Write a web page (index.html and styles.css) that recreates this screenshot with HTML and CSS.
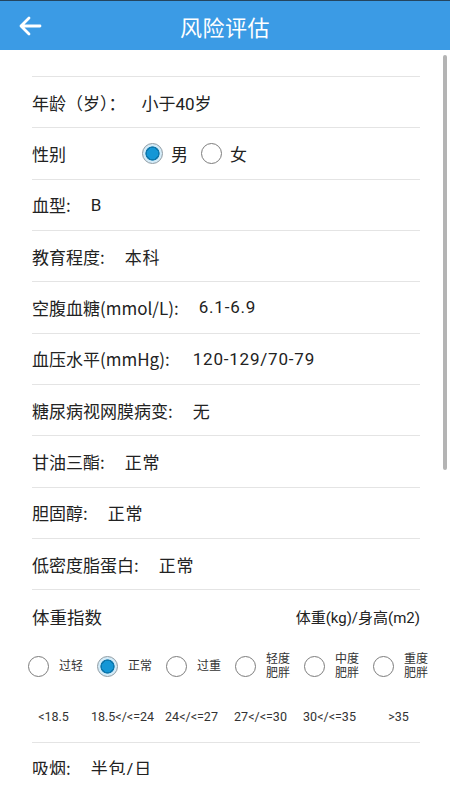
FILE: index.html
```html
<!DOCTYPE html>
<html lang="zh-CN">
<head>
<meta charset="utf-8">
<title>风险评估</title>
<link rel="stylesheet" href="styles.css">
</head>
<body>
<header class="appbar">
  <div class="appbar__left">
    <svg class="back" width="26" height="22" viewBox="0 0 26 22" aria-hidden="true">
      <path d="M3 11 H22 M11 3 L3 11 L11 19" fill="none" stroke="#fff" stroke-width="2.8" stroke-linecap="round" stroke-linejoin="round"/>
    </svg>
  </div>
  <h1 class="appbar__title">风险评估</h1>
  <div class="appbar__right"></div>
</header>
<main class="scroll">
  <div class="list">
    <div class="spacer"></div>
    <div class="row"><span class="label">年龄（岁）：</span><span class="value value--tight">小于40岁</span></div>
    <div class="row">
      <span class="label label--fixed">性别</span>
      <span class="radio radio--on"></span><span class="choice">男</span>
      <span class="radio"></span><span class="choice">女</span>
    </div>
    <div class="row"><span class="label">血型:</span><span class="value">B</span></div>
    <div class="row"><span class="label">教育程度:</span><span class="value">本科</span></div>
    <div class="row"><span class="label">空腹血糖(mmol/L):</span><span class="value">6.1-6.9</span></div>
    <div class="row"><span class="label">血压水平(mmHg):</span><span class="value value--wider">120-129/70-79</span></div>
    <div class="row"><span class="label">糖尿病视网膜病变:</span><span class="value">无</span></div>
    <div class="row"><span class="label">甘油三酯:</span><span class="value">正常</span></div>
    <div class="row"><span class="label">胆固醇:</span><span class="value">正常</span></div>
    <div class="row"><span class="label">低密度脂蛋白:</span><span class="value">正常</span></div>
    <div class="bmi">
      <div class="bmi__head">
        <span class="bmi__title">体重指数</span>
        <span class="bmi__unit">体重(kg)/身高(m2)</span>
      </div>
      <div class="bmi__options">
        <div class="opt"><span class="radio"></span><span class="opt__text">过轻</span></div>
        <div class="opt"><span class="radio radio--on"></span><span class="opt__text">正常</span></div>
        <div class="opt"><span class="radio"></span><span class="opt__text">过重</span></div>
        <div class="opt"><span class="radio"></span><span class="opt__text">轻度<br>肥胖</span></div>
        <div class="opt"><span class="radio"></span><span class="opt__text">中度<br>肥胖</span></div>
        <div class="opt"><span class="radio"></span><span class="opt__text">重度<br>肥胖</span></div>
      </div>
      <div class="bmi__ranges">
        <span>&lt;18.5</span>
        <span>18.5&lt;/&lt;=24</span>
        <span>24&lt;/&lt;=27</span>
        <span>27&lt;/&lt;=30</span>
        <span>30&lt;/&lt;=35</span>
        <span>&gt;35</span>
      </div>
    </div>
    <div class="row"><span class="label">吸烟:</span><span class="value">半包/日</span></div>
  </div>
  <div class="scrollbar"></div>
</main>
<footer class="footer"></footer>
</body>
</html>
```
FILE: styles.css
```css
* { box-sizing: border-box; }

html, body {
  margin: 0;
  padding: 0;
  background: #fff;
}

body {
  width: 450px;
  height: 800px;
  overflow: hidden;
  font-family: Roboto, "Noto Sans CJK SC", sans-serif;
  color: #222;
}

.appbar {
  height: 50px;
  background: #3b9be5;
  border-top: 1px solid #24455f;
  display: grid;
  grid-template-columns: 1fr auto 1fr;
  align-items: center;
}

.appbar__left {
  display: flex;
  align-items: center;
  padding-left: 18px;
  padding-top: 1px;
}

.back { display: block; }

.appbar__title {
  margin: 0;
  font-family: "Noto Sans CJK SC", sans-serif;
  font-size: 22px;
  font-weight: normal;
  color: #fff;
  letter-spacing: 0.5px;
}

.scroll {
  position: relative;
  height: 725px;
  overflow: hidden;
}

.list {
  padding: 0 30px 0 32px;
}

.spacer {
  height: 27px;
  border-bottom: 1px solid #e4e4e4;
}

.row {
  height: 51.33px;
  border-bottom: 1px solid #e4e4e4;
  display: flex;
  align-items: center;
  font-size: 17px;
  white-space: nowrap;
}

.label {
  flex: none;
  font-family: "Noto Sans CJK SC", sans-serif;
}
.label--fixed { width: 110px; }

.value {
  margin-left: 20px;
  font-family: Roboto, "Noto Sans CJK SC", sans-serif;
  letter-spacing: 0.8px;
}
.value--tight { margin-left: 16px; letter-spacing: 0; }
.value--wider { margin-left: 23px; }

.radio {
  flex: none;
  width: 21px;
  height: 21px;
  border-radius: 50%;
  border: 1.3px solid #7c7c7c;
  background: #fff;
}

.radio--on {
  border-color: #8f9ba3;
  background: radial-gradient(circle, #1597d6 0 5.6px, #0e78ad 5.6px 6.8px, #d3ebf8 7.4px);
}

.choice {
  margin-left: 8px;
  margin-right: 13px;
  font-family: "Noto Sans CJK SC", sans-serif;
}

.bmi {
  border-bottom: 1px solid #e4e4e4;
}

.bmi__head {
  height: 51px;
  display: flex;
  justify-content: space-between;
  align-items: center;
  padding-top: 1px;
  white-space: nowrap;
}

.bmi__title {
  font-family: "Noto Sans CJK SC", sans-serif;
  font-size: 17.5px;
}
.bmi__unit { font-size: 15px; }

.bmi__options,
.bmi__ranges {
  display: grid;
  grid-template-columns: repeat(6, 69px);
  margin: 0 -13px;
}

.bmi__options {
  height: 50px;
  align-items: center;
}

.opt {
  display: flex;
  align-items: center;
  padding-left: 9px;
}

.opt__text {
  margin-left: 10px;
  font-family: Roboto, "Noto Sans CJK SC", sans-serif;
  font-size: 12px;
  line-height: 14px;
  color: #333;
}

.bmi__ranges {
  height: 50.4px;
  align-items: center;
  font-size: 12.5px;
  color: #333;
  white-space: nowrap;
}

.bmi__ranges span { text-align: center; }

.scrollbar {
  position: absolute;
  right: 3px;
  top: 5px;
  width: 4px;
  height: 415px;
  background: #b4b4b4;
  border-radius: 2px;
}

.footer {
  height: 25px;
  background: #fff;
}
```
